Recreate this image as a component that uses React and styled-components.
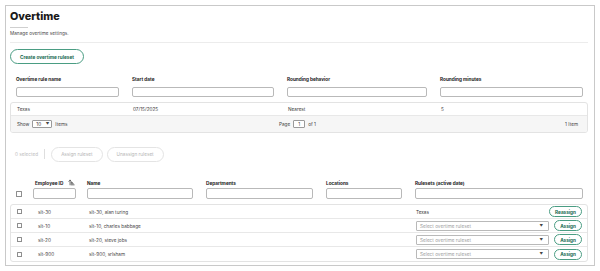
import React from "react";
import styled, { createGlobalStyle } from "styled-components";
import { ArrowUpNarrowWide } from "lucide-react";

const GlobalStyle = createGlobalStyle`
  html, body {
    margin: 0;
    padding: 0;
    background: #fff;
  }
  body {
    font-family: Inter, "Noto Sans", sans-serif;
    color: #333;
  }
  * {
    box-sizing: border-box;
  }
`;

const rulesets = [
  { name: "Texas", start: "07/15/2025", rounding: "Nearest", minutes: "5" },
];

const employees = [
  { id: "slt-30", name: "slt-30, alan turing", ruleset: "Texas" },
  { id: "slt-10", name: "slt-10, charles babbage" },
  { id: "slt-20", name: "slt-20, steve jobs" },
  { id: "slt-900", name: "slt-900, srlsham" },
];

export default function App() {
  return (
    <>
      <GlobalStyle />
      <Frame>
        <Title>Overtime</Title>
        <TitleRule />
        <Subtitle>Manage overtime settings.</Subtitle>
        <Divider />

        <PillButton $top={6}>Create overtime ruleset</PillButton>

        <RulesTable>
          <RulesRow>
            <HeadCell>Overtime rule name</HeadCell>
            <HeadCell>Start date</HeadCell>
            <HeadCell>Rounding behavior</HeadCell>
            <HeadCell>Rounding minutes</HeadCell>
          </RulesRow>
          <RulesFilterRow>
            <Cell><FilterInput /></Cell>
            <Cell><FilterInput /></Cell>
            <Cell><FilterInput /></Cell>
            <Cell $right={5}><FilterInput /></Cell>
          </RulesFilterRow>
          <TableBox>
            {rulesets.map((r) => (
              <RulesBodyRow key={r.name}>
                <Cell>{r.name}</Cell>
                <Cell>{r.start}</Cell>
                <Cell>{r.rounding}</Cell>
                <Cell>{r.minutes}</Cell>
              </RulesBodyRow>
            ))}
            <Pager>
              <PagerGroup>
                Show
                <MiniSelect>
                  10 <Caret>▼</Caret>
                </MiniSelect>
                Items
              </PagerGroup>
              <PagerGroup>
                Page
                <PageBox>1</PageBox>
                of 1
              </PagerGroup>
              <PagerGroup $end>1 Item</PagerGroup>
            </Pager>
          </TableBox>
        </RulesTable>

        <BulkBar>
          <SelectedCount>0 selected</SelectedCount>
          <BulkDivider />
          <PillButton $disabled>Assign ruleset</PillButton>
          <PillButton $disabled>Unassign ruleset</PillButton>
        </BulkBar>

        <EmployeeTable>
          <EmpRow>
            <span />
            <HeadCell $inset={2}>
              Employee ID
              <SortIcon size={7} strokeWidth={2.2} />
            </HeadCell>
            <HeadCell>Name</HeadCell>
            <HeadCell>Departments</HeadCell>
            <HeadCell>Locations</HeadCell>
            <HeadCell>Rulesets (active date)</HeadCell>
          </EmpRow>
          <EmpFilterRow>
            <Cell $right={0}><Checkbox /></Cell>
            <Cell $right={5}><FilterInput $tall /></Cell>
            <Cell><FilterInput $tall /></Cell>
            <Cell><FilterInput $tall /></Cell>
            <Cell><FilterInput $tall /></Cell>
            <Cell $right={5}><FilterInput $tall /></Cell>
          </EmpFilterRow>
          <TableBox>
            {employees.map((e) => (
              <EmpBodyRow key={e.id}>
                <Cell $right={0}><Checkbox $small /></Cell>
                <Cell $inset={4}>{e.id}</Cell>
                <Cell $inset={1}>{e.name}</Cell>
                <Cell />
                <Cell />
                <Cell $right={5}>
                  <RulesetCell>
                    {e.ruleset ? (
                      <>
                        <span>{e.ruleset}</span>
                        <PillButton $small>Reassign</PillButton>
                      </>
                    ) : (
                      <>
                        <RulesetSelect>
                          Select overtime ruleset
                          <Caret>▼</Caret>
                        </RulesetSelect>
                        <PillButton $small>Assign</PillButton>
                      </>
                    )}
                  </RulesetCell>
                </Cell>
              </EmpBodyRow>
            ))}
          </TableBox>
        </EmployeeTable>
      </Frame>
    </>
  );
}

const Frame = styled.div`
  margin: 5px;
  height: 261px;
  border: 1px solid #c9c9c9;
  padding: 3px 6px 0 4px;
  overflow: hidden;
  font-size: 4.7px;
`;

const Title = styled.h1`
  margin: 0;
  font-size: 10.8px;
  line-height: 16px;
  font-weight: 800;
  color: #1a1a1a;
`;

const TitleRule = styled.div`
  width: 18px;
  height: 1px;
  margin-top: 1.5px;
  background: #cfcfcf;
`;

const Subtitle = styled.p`
  margin: 2.7px 0 0;
  font-size: 4.7px;
  line-height: 7px;
  color: #4a4a4a;
`;

const Divider = styled.div`
  height: 1px;
  margin-top: 5px;
  background: #ececec;
`;

const PillButton = styled.button`
  display: inline-flex;
  align-items: center;
  justify-content: center;
  margin-top: ${({ $top }) => ($top ? `${$top}px` : 0)};
  height: ${({ $small }) => ($small ? "11px" : "15px")};
  padding: ${({ $small }) => ($small ? "0 5px" : "0 9px")};
  border-radius: 8px;
  border: 1px solid ${({ $disabled }) => ($disabled ? "#e4e4e4" : "#4a9d83")};
  background: #fff;
  color: ${({ $disabled }) => ($disabled ? "#b4b4b4" : "#17694f")};
  font-family: inherit;
  font-size: 4.7px;
  font-weight: ${({ $disabled }) => ($disabled ? 400 : 700)};
  white-space: nowrap;
  cursor: pointer;
`;

const RulesTable = styled.div`
  margin-top: 12px;
  width: 578px;
`;

const rulesCols = "116px 155px 153px 1fr";
const empCols = "17px 54px 119px 120px 89px 1fr";

const RulesRow = styled.div`
  display: grid;
  grid-template-columns: ${rulesCols};
  height: 6px;
  align-items: center;
`;

const RulesFilterRow = styled.div`
  display: grid;
  grid-template-columns: ${rulesCols};
  margin-top: 5px;
  padding-bottom: 5px;
`;

const RulesBodyRow = styled.div`
  display: grid;
  grid-template-columns: ${rulesCols};
  height: 13px;
  align-items: center;
  border-bottom: 1px solid #e8e8e8;
  color: #3a3a3a;
`;

const HeadCell = styled.div`
  display: flex;
  align-items: center;
  padding-left: ${({ $inset = 0 }) => 6 + $inset}px;
  font-weight: 700;
  color: #222;
  white-space: nowrap;
`;

const Cell = styled.div`
  display: flex;
  align-items: center;
  padding-left: ${({ $inset = 0 }) => 6 + $inset}px;
  padding-right: ${({ $right = 7 }) => $right}px;
  white-space: nowrap;
  min-width: 0;
`;

const FilterInput = styled.div`
  width: 100%;
  height: ${({ $tall }) => ($tall ? "11px" : "10px")};
  border: 1px solid #b9b9b9;
  border-radius: 2px;
  background: #fff;
`;

const TableBox = styled.div`
  border: 1px solid #e3e3e3;
  border-radius: 3px;
  overflow: hidden;
`;

const Pager = styled.div`
  display: grid;
  grid-template-columns: 1fr auto 1fr;
  align-items: center;
  height: 16px;
  padding: 0 9px 0 6px;
  background: #f6f6f6;
  color: #444;
`;

const PagerGroup = styled.div`
  display: flex;
  align-items: center;
  gap: 3px;
  justify-content: ${({ $end }) => ($end ? "flex-end" : "flex-start")};
`;

const MiniSelect = styled.div`
  display: flex;
  align-items: center;
  justify-content: space-between;
  width: 20px;
  height: 8px;
  padding: 0 2px 0 3px;
  border: 1px solid #9a9a9a;
  border-radius: 1px;
  background: #fff;
  color: #333;
`;

const PageBox = styled.div`
  display: flex;
  align-items: center;
  justify-content: center;
  width: 12px;
  height: 8px;
  border: 1px solid #9a9a9a;
  border-radius: 1px;
  background: #fff;
`;

const Caret = styled.span`
  font-size: 3.5px;
  color: #444;
`;

const BulkBar = styled.div`
  display: flex;
  align-items: center;
  gap: 4px;
  margin-top: 14px;
  padding-left: 5px;
  height: 14px;
`;

const SelectedCount = styled.span`
  color: #bdbdbd;
`;

const BulkDivider = styled.span`
  width: 1px;
  height: 10px;
  margin: 0 2px;
  background: #dedede;
`;

const EmployeeTable = styled.div`
  margin-top: 18px;
  width: 578px;
`;

const EmpRow = styled.div`
  display: grid;
  grid-template-columns: ${empCols};
  height: 6px;
  align-items: center;
`;

const EmpFilterRow = styled.div`
  display: grid;
  grid-template-columns: ${empCols};
  align-items: center;
  margin-top: 3px;
  padding-bottom: 5px;
`;

const EmpBodyRow = styled.div`
  display: grid;
  grid-template-columns: ${empCols};
  height: 14px;
  align-items: center;
  border-bottom: 1px solid #e8e8e8;
  color: #444;

  &:last-child {
    border-bottom: 0;
  }
`;

const SortIcon = styled(ArrowUpNarrowWide)`
  margin-left: 5px;
  color: #222;
`;

const Checkbox = styled.span`
  display: block;
  flex-shrink: 0;
  width: ${({ $small }) => ($small ? "5px" : "6px")};
  height: ${({ $small }) => ($small ? "5px" : "6px")};
  border: 1px solid #8e8e8e;
  border-radius: 0.5px;
  background: #fff;
`;

const RulesetCell = styled.div`
  display: flex;
  align-items: center;
  justify-content: space-between;
  width: 100%;
  color: #333;
`;

const RulesetSelect = styled.div`
  display: flex;
  align-items: center;
  justify-content: space-between;
  width: 133px;
  height: 10px;
  padding: 0 5px 0 3px;
  border: 1px solid #b9b9b9;
  border-radius: 1px;
  color: #a0a0a0;
`;
